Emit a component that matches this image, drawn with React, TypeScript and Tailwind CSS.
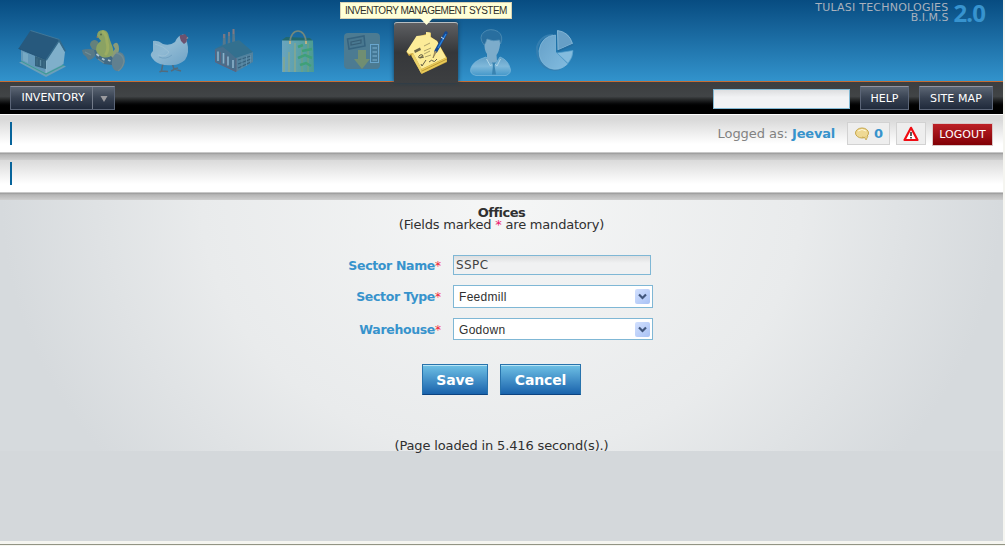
import type { ReactNode } from "react";

const svgProps = { className: "block h-[60px] w-16", fill: "none" } as const;

function HouseIcon() {
  return (
    <svg {...svgProps} viewBox="10 22 64 60">
      <path d="M19 62.500 46 77 66 66.500 42 56Z" fill="#6c9fb9" />
      <path d="M21 61 46 74 64 65" stroke="#3f9c97" strokeWidth="1.300" />
      <path d="M21 48 46 59 46 73 21 60.500Z" fill="#6298b9" />
      <path d="M46 60 59 40 65 52 63.500 64 46 73Z" fill="#7fafca" />
      <path d="M46 59V73" stroke="#9bc2d3" strokeWidth=".8" />
      <path d="M30.500 30.500 59.500 39.500 46 60 18.500 48.500Z" fill="#27597d" />
      <path d="M30.500 30.500 59.500 39.500" stroke="#4a7c99" strokeWidth=".8" />
      <path d="M18.500 48.500 46 60" stroke="#1f4f72" strokeWidth=".8" />
      <path d="M59.500 39 66 51 64.500 51.500 59 42 46.500 61 46 59Z" fill="#346a8b" />
      <path d="M23 52 28 54V63L23 60.500Z" fill="#76a9c4" />
      <path d="M35 56 46 60V69L35 66Z" fill="#33617c" />
      <path d="M40.500 60V66" stroke="#5b8ca4" strokeWidth="1.300" />
      <path d="M37 58.500V65M44 61V68" stroke="#44738c" strokeWidth=".8" />
    </svg>
  );
}

function ChickIcon() {
  return (
    <svg {...svgProps} viewBox="74 22 64 60">
      <path d="M90 45Q90 41 94 40 98 40 99 44L99 52 92 49Z" fill="#64817b" />
      <path d="M82 50Q88 48 95 50L95 56Q92 60 88 60 86 56 83 54Z" fill="#587987" />
      <path d="M94 50Q107 50 114 57L112 65 104 64 96 58Z" fill="#426a84" />
      <path d="M113 45Q116 41 118 44 120 48 118 54L113 58 110 55 115 49Z" fill="#8a9b79" />
      <path d="M97 36Q97 30 103 30 108 30 109 37L111 43Q114 49 113 54 109 59 102 57 97 54 96 50 96 44 101 41 97 39Z" fill="#8aa263" />
      <path d="M103 32Q107 35 107 42 109 49 106 54" stroke="#9cad62" strokeWidth="3" strokeLinecap="round" />
      <ellipse cx="118.500" cy="61.500" rx="6.500" ry="9.500" fill="#61808f" transform="rotate(12 118 61)" />
      <path d="M116 53Q123 54 124 61 123 68 118 71" stroke="#718c94" strokeWidth="1.300" />
      <path d="M96.500 54 99 56M102 58.500 104.500 60M108 60 110.500 61" stroke="#b2c8d2" strokeWidth="1.700" />
      <path d="M98 59 104 63M85 52 91 55" stroke="#6e8c97" strokeWidth="1.300" />
      <circle cx="101" cy="34.500" r="1" fill="#576b4d" />
      <path d="m98 36-2 1 2 1Z" fill="#a77d50" />
    </svg>
  );
}

function HenIcon() {
  return (
    <svg {...svgProps} viewBox="138 22 64 60">
      <defs>
        <linearGradient id="hen" x2=".8" y2="1">
          <stop stopColor="#83afc9" /><stop offset=".5" stopColor="#8fb9d3" /><stop offset="1" stopColor="#73a6c8" />
        </linearGradient>
      </defs>
      <path d="M163 63 161.500 71 168 71.500M161.500 71 159.500 72M172 63 174 69 181 71M174 69.500 171 71M174 69 178 68" stroke="#526b7d" strokeWidth="1.500" />
      <path d="M153 41Q158 40 163 44 170 46 175 42 178 35 183 34.500 187 35 187 42 190 53 185 60 179 65 173 65 167 66 160 64 153 61 151 56 150 54 153 51Z" fill="url(#hen)" />
      <path d="M155 44Q164 46 169 52 166 58 158 55" stroke="#a1c3d7" strokeWidth="1" opacity=".7" />
      <path d="M159 57Q166 60 172 55" stroke="#689abb" strokeWidth=".7" />
      <path d="M180 38Q179 34 182 35L185 34 187.500 37 186.500 42 184 44 181 41Z" fill="#6c526f" />
      <path d="m187 37 1.500 1-2 1Z" fill="#a9a59b" />
    </svg>
  );
}

function FactoryIcon() {
  return (
    <svg {...svgProps} viewBox="202 22 64 60">
      <path d="M223 34H225.500L226 51H222.500ZM228 32H230L230.500 50H227.500ZM232.500 29H234.500L235.500 48H232Z" fill="#57788c" />
      <path d="M224 34V38M229 32V36M233.500 29V34" stroke="#837782" strokeWidth="1.500" />
      <path d="M215 49 223 45 236 55V72L215 62Z" fill="#466f8d" />
      <path d="M236 57 253 52V62L236 72Z" fill="#52829e" />
      <path d="M215 49 223 45 239 40 253 52 236 58 228 51 223 47Z" fill="#33708f" />
      <path d="M218 51.500V61M223.500 53V63.500M228 56.500V65.500M233 60V68" stroke="#8bb1ca" strokeWidth="1.600" />
      <path d="M238 60 251 56M238 64 251 59M238 68 251 62" stroke="#345f7b" strokeWidth="1.100" />
      <path d="M242 58V68M246.500 56V66M250.500 55V63" stroke="#6998b3" strokeWidth=".7" />
      <path d="M215.500 50V62L236 71.500V58M220.500 52V63M226 55V66" stroke="#65617a" strokeWidth=".8" />
    </svg>
  );
}

function BagIcon() {
  return (
    <svg {...svgProps} viewBox="266 22 64 60">
      <defs>
        <linearGradient id="bag" x2="1" y2="0">
          <stop stopColor="#6aa4bf" /><stop offset=".5" stopColor="#5ca1aa" /><stop offset="1" stopColor="#4b9b91" />
        </linearGradient>
      </defs>
      <path d="M282 40 286 37 310 38 313 41 308 44 285 43Z" fill="#22696f" />
      <path d="M282 40.500H313L314 72H282Z" fill="url(#bag)" />
      <path d="M284 57V72M289 52V72M295 43V72" stroke="#80a794" strokeWidth="1.800" />
      <path d="M302 45V72M308 43V72" stroke="#6da181" strokeWidth="1.300" />
      <path d="M298 47 303 45M302 51 312 49M298 58 305 55 312 58M300 65 306 63 311 66" stroke="#3fa078" strokeWidth="2.500" />
      <path d="M290 43C290 27 306 27 306 43" stroke="#74887c" strokeWidth="1.600" />
      <path d="M290 41V44M306 41V44" stroke="#d6ba83" strokeWidth="1.500" />
    </svg>
  );
}

function TransferIcon() {
  return (
    <svg {...svgProps} viewBox="330 22 64 60">
      <rect x="344" y="33" width="36" height="36" rx="4" fill="#4c7b92" />
      <path d="M358 50H366V59H370L362 69 354 59H358Z" fill="#708e72" />
      <path d="M347.500 39 364 36 365 46 349 49Z" stroke="#35637f" fill="#497890" strokeWidth="1.500" />
      <path d="M351 42 361 40V43L351 45Z" stroke="#375e76" strokeWidth="1.200" />
      <rect x="370.500" y="44.500" width="8" height="18" stroke="#69a6cd" fill="#447896" />
      <path d="M372.500 48H377M372.500 52H377M372.500 56H377M372.500 60H377" stroke="#7eb2d0" strokeWidth="1.200" />
    </svg>
  );
}

function NotesIcon() {
  return (
    <svg {...svgProps} viewBox="394 22 64 60">
      <path d="M409 56 406.500 52 417 37 426 34V32L431 33V37L437 41 447 58 447 62 421.500 74 411 55Z" fill="#c8a43e" />
      <path d="M406.500 51.500 416.500 36 426 35V32L430.500 32.500 430.500 37 437 41 446 57.500 421.500 69 413 53 409 54Z" fill="#fcec98" />
      <path d="M413 53 421.500 69V74L411.500 56Z" fill="#ead16a" />
      <path d="M422 69 446.500 57.500V61.500L422 73.500Z" fill="#e8cb59" />
      <path d="m422 71 25-12" stroke="#a98224" strokeWidth=".7" />
      <path d="m414 50.500 6-3 1 2.500-6 3Z" fill="#6a6549" />
      <path d="m424 46 6-3m-6 8 7-3m-7 6 6-3m-5 6 6-2" stroke="#8c8258" strokeWidth=".7" />
      <path d="M419 58q-1-2 1-3 3-1 3 1Zm1 0 4-1m-3 7 1 2 4-6m3 2q3-3 4-1t4-2" stroke="#514d3b" strokeWidth=".9" />
      <path d="m446 33-10 18" stroke="#164892" strokeWidth="3.400" strokeLinecap="round" />
      <path d="m446 34-8 14" stroke="#2b86de" strokeWidth="1.300" />
      <path d="m435 51-2 7 3.500-6.500" fill="#c5ae76" stroke="#746442" strokeWidth=".6" />
      <path d="m441 37 3 2" stroke="#c7dcef" strokeWidth="1" />
    </svg>
  );
}

function UserIcon() {
  return (
    <svg {...svgProps} viewBox="458 22 64 60">
      <defs>
        <linearGradient id="person" x2="0" y2="1">
          <stop stopColor="#629fc6" /><stop offset=".5" stopColor="#7fb8da" /><stop offset="1" stopColor="#4498ca" />
        </linearGradient>
      </defs>
      <path d="M486 57 494 66 500 57Q508 60 510 68 512 73 506 75.500L476 75.500Q469 74 471 68 473 61 486 57Z" fill="url(#person)" stroke="#78b6da" strokeWidth=".8" />
      <path d="M484.500 43Q483 34 491 33L500 38 500 45Q499 52 496.500 55L497 61 493.500 65 487 60 487 54Q484 50 484.500 43Z" fill="#7caccb" />
      <path d="M484 45Q478 37 484 32 490 27.500 498 31.500 504 36 500.500 44L499.500 40Q493 42 487 39L485.500 43Z" fill="#286e9f" stroke="#5793b9" strokeWidth=".7" />
      <path d="m486.500 59 4 7 3-3 3.500 3 3.500-7" stroke="#b6d8e9" strokeWidth=".9" />
      <path d="m492 62.500 3.500 0-1 3 1.500 9h-4l1-9Z" fill="#3983b1" />
    </svg>
  );
}

function ChartIcon() {
  return (
    <svg {...svgProps} viewBox="522 22 64 60">
      <defs>
        <linearGradient id="pie" x2="1" y2="1">
          <stop stopColor="#659fc7" /><stop offset="1" stopColor="#82bce0" />
        </linearGradient>
      </defs>
      <path d="M553 35Q541 35 537 47 536 60 545 67 552 71 560 69" stroke="#347eb0" strokeWidth="2" />
      <path d="M555.500 35V52L567.500 64Q559 72 549 68 539 63 539 51 541 36 555.500 35Z" fill="url(#pie)" stroke="#88bcdb" strokeWidth=".7" />
      <path d="m557 53 16-2.500q0 7-5 13Z" fill="#84bcde" stroke="#549dca" strokeWidth=".7" />
      <path d="M557.500 30.500Q569 32 572.500 43.500L558 50Z" fill="#679fc6" stroke="#92c0dc" strokeWidth=".8" />
      <path d="m558 51 15-6.500" stroke="#236c9f" strokeWidth="1.700" />
    </svg>
  );
}

const modules = [HouseIcon, ChickIcon, HenIcon, FactoryIcon, BagIcon, TransferIcon, NotesIcon, UserIcon, ChartIcon];

const darkButton = "border border-[#5b6577] border-t-[#92939f] bg-linear-to-b from-[#5c6674] via-[#384252] to-[#202a3b] text-white";

function Header() {
  return (
    <header className="flex h-[82px] justify-between border-b border-[#c56c34] bg-linear-to-b from-[#074c81] to-[#3293cc]">
      <nav className="flex pt-[22px] pl-[10px]">
        {modules.map((Icon, i) => (
          <a key={i} className={i === 6 ? "relative z-10 h-[61px] w-16 rounded-t-[3px] bg-linear-to-b from-[#606164] via-[#35373a] to-[#3d3f41] shadow-[inset_0_1px_0_#b7bdc1,0_-1px_4px_#123b58]" : "h-[60px] w-16"}>
            <Icon />
            {i === 6 && (
              <span className="absolute -top-5 -left-[54px] flex h-[17px] w-[172px] items-center border border-[#d9d2b4] bg-[#ffffd7] pl-[4px] font-['Liberation_Sans',sans-serif] text-[10px] leading-none tracking-[-0.52px] whitespace-nowrap text-[#30302b]">
                INVENTORY MANAGEMENT SYSTEM
                <svg className="absolute top-[15px] left-[79px]" width="13" height="7" viewBox="0 0 13 7"><path d="M0 0H13L6.500 7Z" fill="#ffffd7" /></svg>
              </span>
            )}
          </a>
        ))}
      </nav>
      <div className="flex pt-[2px] pr-[18px]">
        <div className="pt-px text-right text-[11px] leading-[10px] whitespace-nowrap text-[#a9b1bd]">
          <div className="tracking-[0.22px]">TULASI TECHNOLOGIES</div>
          <div>B.I.M.S</div>
        </div>
        <div className="ml-[5px] h-[22px] font-['Noto_Sans',sans-serif] text-[24px] leading-[22px] font-bold tracking-[-0.9px] whitespace-nowrap text-[#3793cf]">2.0</div>
      </div>
    </header>
  );
}

function MenuBar() {
  return (
    <div className="flex h-[32px] items-start bg-linear-to-b from-[#3c3e40] via-[#414446] via-45% to-black to-80% pt-[4px] pl-[10px] text-[11px]">
      <div className={`${darkButton} flex h-6 w-[105px]`}>
        <span className="flex w-[82px] items-center justify-center border-r border-[#737b89] pt-px pl-[3px]">INVENTORY</span>
        <span className="flex flex-1 items-center justify-center pt-px">
          <svg width="8" height="6" viewBox="0 0 8 6"><path d="M0.500 0H7.500L4 6Z" fill="#9a9a9e" /></svg>
        </span>
      </div>
      <input className="mt-[3px] ml-auto h-5 w-[137px] border border-[#82b8d3] bg-linear-to-b from-[#dddee0] to-[#f1f2f4] to-40% outline-none" />
      <button className={`${darkButton} ml-[10px] h-6 w-[49px] pt-[2px]`}>HELP</button>
      <button className={`${darkButton} mr-[10px] ml-[10px] h-6 w-[74px] pt-[2px] tracking-[0.1px] whitespace-nowrap`}>SITE MAP</button>
    </div>
  );
}

function Strip({ children }: { children?: ReactNode }) {
  return (
    <div className="flex h-[32px] items-start justify-between bg-linear-to-b from-[#dadada] to-white to-75% pl-[10px]">
      <i className="mt-[2px] block h-[23px] w-[2px] bg-[#07649b]" />
      {children}
    </div>
  );
}

function StripShadow() {
  return <div className="h-[8px] border-t border-[#c8c8c8] bg-linear-to-b from-[#989898] via-[#b6b6b6] via-25% to-[#cecece]" />;
}

function Row({ label, children }: { label: string; children: ReactNode }) {
  return (
    <div className="flex items-center">
      <label className="w-[441px] pt-px text-right text-[12.5px] leading-4 font-bold tracking-[-0.34px] whitespace-nowrap text-[#3793cc]">
        {label}<span className="text-[12px] font-normal tracking-normal text-[#f01e38]">*</span>
      </label>
      <div className="ml-[12px]">{children}</div>
    </div>
  );
}

function Select({ value }: { value: string }) {
  return (
    <div className="flex h-full w-[200px] items-center justify-between border border-[#7fb7d5] bg-white pr-[2px] pl-[5px] font-['Liberation_Sans',sans-serif] text-[12px] text-[#303030]">
      <span className="pt-px tracking-[0.3px]">{value}</span>
      <span className="flex h-[15px] w-[15px] items-center justify-center rounded-[2px] bg-linear-to-br from-[#d2e0fe] to-[#a9c2f5]">
        <svg width="9" height="7" viewBox="0 0 9 7" fill="none"><path d="m1 1.500 3.500 3.500L8 1.500" stroke="#41567c" strokeWidth="2.200" /></svg>
      </span>
    </div>
  );
}

const actionButton = "h-[31px] border border-[#2873ac] border-b-[#0c4380] bg-linear-to-b from-[#6fc1e5] to-[#1963ac] pt-[2px] text-[14px] font-bold tracking-[-0.15px] text-white shadow-[inset_0_1px_0_#b9e5f5]";

export default function App() {
  return (
    <div className="h-[546px] w-[1005px] overflow-hidden bg-[#f5f5f0] font-['DejaVu_Sans',Verdana,sans-serif] text-[#303030]">
      <div className="flex h-[541px] w-[1003px] flex-col bg-[#d4d8db]">
        <Header />
        <MenuBar />
        <div className="h-[6px] border-t border-white bg-[#dadada]" />
        <Strip>
          <div className="mr-[10px] flex items-start">
            <span className="pt-[4px] text-[13px] leading-5 tracking-[-0.06px] whitespace-nowrap text-[#828282]">Logged as: <b className="tracking-[-0.2px] text-[#3793cc]">Jeeval</b></span>
            <span className="mt-[2px] ml-[12px] flex h-[23px] w-[43px] items-center border border-[#d2d2d2] bg-[#eeeeee] pl-[7px] text-[13px] font-bold text-[#3793cc]">
              <svg width="15" height="14" viewBox="0 0 15 14"><ellipse cx="7" cy="6" rx="6.500" ry="5" fill="#efd994" stroke="#c6a74c" /><path d="M7 10q4 0 4 3l2-4" fill="#ead38b" stroke="#c6a74c" strokeWidth=".8" /><path d="M3 4q4-3 8 0" stroke="#fff8d9" fill="none" /></svg>
              <span className="ml-[4px]">0</span>
            </span>
            <span className="mt-[2px] ml-[6px] flex h-[23px] w-[30px] items-center justify-center border border-[#d2d2d2] bg-[#eeeeee]">
              <svg width="16" height="16" viewBox="0 0 16 16"><path d="M8 1.800 14.500 14H1.500Z" fill="white" stroke="#f00b12" strokeWidth="2.200" strokeLinejoin="round" /><path d="M8 6V10M8 11V12.500" stroke="#252525" strokeWidth="1.500" /></svg>
            </span>
            <button className="mt-[3px] ml-[6px] h-[23px] w-[61px] border border-[#d9c7c7] bg-linear-to-b from-[#bd2026] to-[#810004] pt-px text-[11px] text-white">LOGOUT</button>
          </div>
        </Strip>
        <StripShadow />
        <Strip />
        <StripShadow />
        <main className="h-[251px] bg-[radial-gradient(ellipse_500px_420px_at_50%_0%,#f5f6f6_0%,#e9ebec_60%,#d6dadd_100%)] text-[13px]">
          <div className="pt-[7px] text-center leading-[12px]">
            <h1 className="text-[13px] leading-[12px] font-bold tracking-[-0.5px]">Offices</h1>
            <p className="tracking-[-0.2px]">(Fields marked <span className="text-[#ed176d]">*</span> are mandatory)</p>
          </div>
          <div className="pt-[24px]">
            <Row label="Sector Name">
              <input defaultValue="SSPC" className="block h-5 w-[198px] border border-[#7fb7d5] bg-linear-to-b from-[#dddedf] to-[#f0f1f2] to-40% px-[2px] text-[12px] tracking-[0.4px] text-[#424242] outline-none" />
            </Row>
            <div className="h-[10px]" />
            <Row label="Sector Type"><div className="h-[23px]"><Select value="Feedmill" /></div></Row>
            <div className="h-[10px]" />
            <Row label="Warehouse"><div className="h-[22px]"><Select value="Godown" /></div></Row>
          </div>
          <div className="mt-6 flex justify-center gap-[12px]">
            <button className={`${actionButton} w-[66px]`}>Save</button>
            <button className={`${actionButton} w-[81px]`}>Cancel</button>
          </div>
          <p className="mt-[43px] text-center leading-4 tracking-[-0.14px]">(Page loaded in 5.416 second(s).)</p>
        </main>
      </div>
      <div className="mt-[3px] h-px bg-[#929484]" />
    </div>
  );
}
